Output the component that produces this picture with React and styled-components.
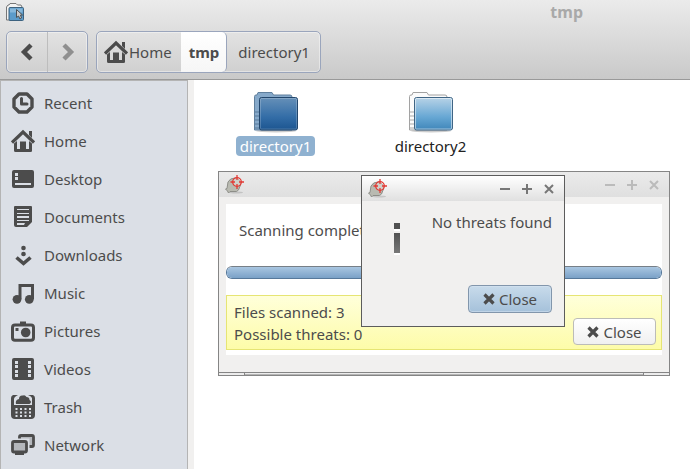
import React from "react";
import styled, { createGlobalStyle, css } from "styled-components";

const INK = "#4c4c4c";

const GlobalStyle = createGlobalStyle`
  * { box-sizing: border-box; }
  body {
    margin: 0;
    color: ${INK};
    background: #fff;
    font: 15px/22px "Noto Sans", "Open Sans", sans-serif;
  }
  button { font: inherit; color: inherit; margin: 0; }
  svg { display: block; flex: none; }
`;

const Page = styled.div`
  display: flex;
  flex-direction: column;
  min-height: 100vh;
`;

/* ---------- header ---------- */

const Header = styled.header`
  height: 80px;
  background: linear-gradient(#ebebeb, #c9c9c9);
  border-bottom: 1px solid #999;
`;

const TitleRow = styled.div`
  display: flex;
  align-items: center;
  justify-content: space-between;
  height: 24px;
  padding: 0 107px 0 6px;
`;

const Title = styled.h1`
  margin: 0;
  font-size: 16px;
  line-height: 22px;
  font-weight: 700;
  color: #a9a9a9;
`;

const Toolbar = styled.div`
  display: flex;
  gap: 8px;
  padding: 7px 6px 0;
`;

const Segments = styled.div`
  display: flex;
  height: 42px;
  border: 1px solid #9aa5bc;
  border-radius: 5px;
  background: linear-gradient(#e2e2e2, #d0d0d0);
  box-shadow: inset 0 0 0 1px #ffffff66;
`;

const NavButton = styled.button`
  display: grid;
  place-items: center;
  width: 40px;
  padding: 0;
  border: 0;
  background: none;
  color: ${(p) => (p.disabled ? "#8f8f8f" : INK)};
  & + & { border-left: 1px solid #bdbdbd; }
`;

const Crumb = styled.button`
  display: flex;
  align-items: center;
  gap: 1px;
  padding: 0 9px 0 7px;
  border: 0;
  background: none;
  ${(p) =>
    p.$current &&
    css`
      padding: 0 7px 0 8px;
      border-right: 1px solid #9aa5bc;
      border-radius: 0 5px 5px 0;
      background: linear-gradient(#fff, #f6f6f6);
      font-weight: 700;
    `}
  ${(p) => p.$last && css`padding: 0 10px 0 11px;`}
`;

/* ---------- body ---------- */

const Body = styled.div`
  display: flex;
  flex: 1;
`;

const Sidebar = styled.nav`
  flex: none;
  width: 188px;
  padding: 3px 0 4px 10px;
  background: #dbdfe6;
  border: solid #b4b4b4;
  border-width: 1px 1px 0 1px;
`;

const Place = styled.a`
  display: flex;
  align-items: center;
  gap: 9px;
  height: 38px;
  color: inherit;
  text-decoration: none;
`;

const Splitter = styled.div`
  flex: none;
  width: 6px;
  background: #f1f0ef;
`;

const Files = styled.main`
  position: relative;
  flex: 1;
  background: #fff;
`;

const FileGrid = styled.div`
  display: grid;
  grid-template-columns: repeat(auto-fill, 155px);
  padding: 11px 0 0 4px;
`;

const FileItem = styled.button`
  display: flex;
  flex-direction: column;
  align-items: center;
  gap: 3px;
  padding: 0;
  border: 0;
  background: none;
`;

const FileLabel = styled.span`
  padding: 0 4px;
  line-height: 20px;
  border-radius: 4px;
  color: ${(p) => (p.$selected ? "#fff" : "#222")};
  background: ${(p) => (p.$selected ? "#8fb1d0" : "none")};
`;

/* ---------- windows ---------- */

const Window = styled.section`
  position: absolute;
  display: flex;
  flex-direction: column;
  border: 1px solid ${(p) => (p.$active ? "#5c5c5c" : "#858585")};
  background: #f1f0ef;
`;

const ScanWindow = styled(Window)`
  top: 91px;
  left: 24px;
  width: 452px;
`;

const MessageWindow = styled(Window)`
  top: 95px;
  left: 167px;
  width: 204px;
`;

const WindowBar = styled.div`
  display: flex;
  align-items: center;
  justify-content: space-between;
  height: 25px;
  padding: 0 4px 0 6px;
  color: ${(p) => (p.$active ? "#777" : "#bbb")};
  background: ${(p) =>
    p.$active ? "linear-gradient(#fff, #e0e0e0)" : "linear-gradient(#ebebeb, #dfdfdf)"};
`;

const WindowControls = styled.div`
  display: flex;
`;

const WindowControl = styled.button`
  display: grid;
  place-items: center;
  width: 22px;
  height: 22px;
  padding: 0;
  border: 0;
  background: none;
`;

const ScanBody = styled.div`
  margin: 7px 7px 17px;
  padding-bottom: 5px;
  background: #fff;
`;

const Status = styled.p`
  margin: 0;
  padding: 15px 13px 25px;
`;

const Progress = styled.progress`
  display: block;
  width: 100%;
  height: 13px;
  appearance: none;
  border: 1px solid #56789a;
  border-top-color: #777f87;
  border-radius: 6px;
  overflow: hidden;
  &::-webkit-progress-bar { background: #e4e2e0; }
  &::-webkit-progress-value {
    background: linear-gradient(#a9c6e1, #7aa1c7);
  }
`;

const Summary = styled.div`
  display: flex;
  align-items: flex-end;
  justify-content: space-between;
  margin-top: 16px;
  padding: 5px 5px 4px 7px;
  border: 1px solid #e6e574;
  background: linear-gradient(#ffffda, #fdfca9);
`;

const Counts = styled.p`
  margin: 0;
`;

const GripBar = styled.div`
  height: 3px;
  padding: 0 25px;
  border-top: 1px solid #858585;
  background: #ececec;
`;

const Grip = styled.div`
  height: 2px;
  border: solid #858585;
  border-width: 0 1px;
  background: linear-gradient(#ececec 50%, #b5b5b5 50%);
`;

const PushButton = styled.button`
  display: flex;
  align-items: center;
  justify-content: center;
  gap: 4px;
  width: ${(p) => (p.$primary ? 84 : 83)}px;
  height: ${(p) => (p.$primary ? 28 : 27)}px;
  padding: 0;
  border: 1px solid ${(p) => (p.$primary ? "#8296ac" : "#bcbcb8")};
  border-radius: 4px;
  background: ${(p) =>
    p.$primary ? "linear-gradient(#c8dbeb, #a5c1da)" : "linear-gradient(#fff, #f0f0f0)"};
  box-shadow: ${(p) => (p.$primary ? "inset 0 0 0 1px #d7e5f188" : "none")};
`;

const MessageBody = styled.div`
  display: flex;
  justify-content: space-between;
  padding: 10px 12px 0 32px;
`;

const Message = styled.p`
  margin: 0;
`;

const MessageActions = styled.div`
  display: flex;
  justify-content: flex-end;
  padding: 30px 12px 13px;
`;

/* ---------- drawings ---------- */

const HomeShape = () => (
  <>
    <path d="M1 13.5 12 3l11 10.500" fill="none" stroke="currentColor" strokeWidth="3.2" />
    <path d="M18 2h3v7l-3-3z" />
    <path d="M3 14.500 6 12v8h3v-7.500h6V20h3v-8l3 2.500V22q0 1-1.500 1h-15Q3 23 3 21.500z" />
  </>
);

const shapes = {
  Recent: (
    <>
      <path d="M8 3h8l5 5v8l-5 5H8l-5-5V8z" fill="none" stroke="currentColor" strokeWidth="3.4" strokeLinejoin="round" />
      <path d="M10.500 7.500V13h5.500" fill="none" stroke="currentColor" strokeWidth="3" strokeLinecap="round" strokeLinejoin="round" />
    </>
  ),
  Home: <HomeShape />,
  Desktop: (
    <path fillRule="evenodd" d="M3 3h18q2 0 2 2v14q0 2-2 2H3q-2 0-2-2V5q0-2 2-2zM4 6v3h3V6zM4 10v3h3v-3zM4 16v2h16v-2z" />
  ),
  Documents: (
    <path fillRule="evenodd" d="M4 1h16q1 0 1 1v15l-5 5H5q-2 0-2-2V2q0-1 1-1zM6 4v1h12V4zM6 8v1h12V8zM6 11v2h12v-2zM6 15v1h12v-1zM6 18v2h7l1-2z" />
  ),
  Downloads: (
    <>
      <circle cx="12.500" cy="5" r="2.300" />
      <circle cx="12.500" cy="11" r="2.300" />
      <path d="m5.500 14.500 7 6 7-6" fill="none" stroke="currentColor" strokeWidth="3.6" />
    </>
  ),
  Music: (
    <>
      <path d="M7.500 3H23v15h-3V6h-9.500v12h-3z" />
      <circle cx="6" cy="18.300" r="4.400" />
      <circle cx="18.300" cy="18.300" r="4.400" />
    </>
  ),
  Pictures: (
    <>
      <rect x="1.500" y="6" width="21" height="15.300" rx="2.500" fill="none" stroke="currentColor" strokeWidth="3" />
      <path d="M9 2.500h6V6H9z" />
      <circle cx="14.700" cy="13.500" r="4.800" />
      <path d="M4.500 9h3v3h-3z" />
    </>
  ),
  Videos: (
    <path fillRule="evenodd" d="M3 1h18q2 0 2 2v18q0 2-2 2H3q-2 0-2-2V3q0-2 2-2zM4 4v3h3V4zM4 8v3h3V8zM4 13v3h3v-3zM4 17v3h3v-3zM17 4v3h3V4zM17 8v3h3V8zM17 13v3h3v-3zM17 17v3h3v-3z" />
  ),
  Trash: (
    <>
      <path d="M4 0H2Q0 1 0 3v17q0 4 4 4h16q4 0 4-4V3q0-2-2-3h-5q3 1 4 3v7H3V4q0-2 4-4z" />
      <path d="M5 9q-1-4 3-5 0-4 4-3.500 2-1 3.500 1.500 3 0 3 3 3 2 0 4z" />
      <path d="M4.500 14h16M4.500 17.500h16M4.500 21h16" stroke="#dbdfe6" strokeWidth="1.800" strokeDasharray="2 2.500" />
    </>
  ),
  Network: (
    <>
      <rect x="8.500" y="2.500" width="14" height="11" rx="1.500" fill="#b4b7bc" stroke="currentColor" strokeWidth="2.800" />
      <path d="M0 5.500h18.500V18H17v4.500H0z" fill="#dbdfe6" />
      <rect x="1.500" y="8.500" width="14" height="10.500" rx="1.500" fill="#b4b7bc" stroke="currentColor" strokeWidth="2.800" />
      <path d="M4 20h9v2H4z" />
    </>
  ),
};

const PlaceIcon = ({ name }) => (
  <svg width="24" height="24" viewBox="0 0 24 24" fill="currentColor" aria-hidden="true">
    {shapes[name]}
  </svg>
);

const AppIcon = () => (
  <svg width="18" height="18" viewBox="0 0 18 18" aria-hidden="true">
    <path d="M.5 17V4L2 2h1l1-1.500h6L11.500 2H15l1 2v13z" fill="#f2f2f2" stroke="#777" />
    <rect x="3" y="4.500" width="14.500" height="13" rx="1" fill="#5b9bca" stroke="#3d627f" />
    <path d="M4 5.500h12.500v4H4z" fill="#86b7db" />
    <path d="M10.500 6.500v8l2-1.500 1.500 3 1.500-1-1-3h2z" fill="#c9c9c9" stroke="#4a5054" />
  </svg>
);

const Chevron = ({ right }) => (
  <svg width="14" height="20" viewBox="0 0 14 20" aria-hidden="true">
    <path d={right ? "m3 3 7 7-7 7" : "m11 3-7 7 7 7"} fill="none" stroke="currentColor" strokeWidth="4.400" />
  </svg>
);

const Folder = ({ selected }) => {
  const id = selected ? "folder-dark" : "folder-light";
  return (
    <svg width="46" height="42" viewBox="0 0 46 42" aria-hidden="true">
      <defs>
        <linearGradient id={id} x2="0" y2="1">
          <stop offset="0" stopColor={selected ? "#6690b8" : "#b8d3e7"} />
          <stop offset=".6" stopColor={selected ? "#336da7" : "#67a7d4"} />
          <stop offset="1" stopColor={selected ? "#1c5590" : "#3f86b9"} />
        </linearGradient>
      </defs>
      <ellipse cx="23" cy="40" rx="20" ry="1.500" fill="#0003" />
      <path
        d="M1.500 39V5.500Q1.500 4 3 4h1l1-2.500h14L20.500 4H37q2 0 2 2v33z"
        fill={selected ? "#86a9ca" : "#fbfbfb"}
        stroke={selected ? "#5f7f9d" : "#a2a2a2"}
      />
      <path d="M2 21h4M2 25h4M2 29h4M2 33h4M2 37h4" stroke={selected ? "#6f91b1" : "#d2d2d2"} strokeWidth="2" />
      <rect x="6.500" y="6.500" width="38" height="32.500" rx="2" fill={`url(#${id})`} stroke={selected ? "#22466c" : "#3f6585"} />
      <rect x="7.500" y="7.500" width="36" height="30.500" rx="1" fill="none" stroke="#fff" strokeOpacity={selected ? 0.2 : 0.5} />
    </svg>
  );
};

const ScannerIcon = () => (
  <svg width="20" height="20" viewBox="0 0 20 20" aria-hidden="true">
    <ellipse cx="11" cy="17.500" rx="7" ry="1" fill="#0002" />
    <path d="M2.500 16 .5 14l1.500-.500L3 7q2-4 7-4 6 1 5.500 7l-2 5-2 1.500H5L3.500 18z" fill="#b9bab1" stroke="#8d8e88" />
    <circle cx="12" cy="7" r="4.300" fill="#fff5" stroke="#e23a34" strokeWidth="1.300" />
    <path d="M12 0v5M12 9v5M5.500 7H10M14 7h5" stroke="#e23a34" strokeWidth="1.300" />
  </svg>
);

const controlPaths = {
  Minimize: "M2 7h10",
  Maximize: "M2 7h10M7 2v10",
  Close: "m3 3 8 8M11 3l-8 8",
};

const CloseCross = () => (
  <svg width="12" height="12" viewBox="0 0 12 12" aria-hidden="true">
    <path d="m1.500 1.500 9 9M10.500 1.500l-9 9" stroke="currentColor" strokeWidth="3.200" />
  </svg>
);

const InfoIcon = () => (
  <svg width="7" height="44" viewBox="0 0 7 44" aria-hidden="true">
    <defs>
      <linearGradient id="info" x2="0" y2="1">
        <stop offset="0" stopColor="#525252" />
        <stop offset="1" stopColor="#787878" />
      </linearGradient>
    </defs>
    <path d="M0 18h6v2H0zM0 42h6v2H0z" fill="#fff" />
    <path d="M0 12h6v6H0z" fill="#505050" />
    <path d="M0 22h6v20H0z" fill="url(#info)" />
  </svg>
);

const TitleBar = ({ active }) => (
  <WindowBar $active={active}>
    <ScannerIcon />
    <WindowControls>
      {Object.entries(controlPaths).map(([name, d]) => (
        <WindowControl key={name} type="button" aria-label={name}>
          <svg width="14" height="14" viewBox="0 0 14 14" aria-hidden="true">
            <path d={d} stroke="currentColor" strokeWidth="2" />
          </svg>
        </WindowControl>
      ))}
    </WindowControls>
  </WindowBar>
);

export default function App() {
  return (
    <Page>
      <GlobalStyle />
      <Header>
        <TitleRow>
          <AppIcon />
          <Title>tmp</Title>
        </TitleRow>
        <Toolbar>
          <Segments>
            <NavButton type="button" aria-label="Back"><Chevron /></NavButton>
            <NavButton type="button" aria-label="Forward" disabled><Chevron right /></NavButton>
          </Segments>
          <Segments>
            <Crumb type="button"><PlaceIcon name="Home" />Home</Crumb>
            <Crumb type="button" $current>tmp</Crumb>
            <Crumb type="button" $last>directory1</Crumb>
          </Segments>
        </Toolbar>
      </Header>
      <Body>
        <Sidebar aria-label="Places">
          {Object.keys(shapes).map((name) => (
            <Place key={name} href={`#${name.toLowerCase()}`}>
              <PlaceIcon name={name} />
              {name}
            </Place>
          ))}
        </Sidebar>
        <Splitter />
        <Files>
          <FileGrid>
            <FileItem type="button">
              <Folder selected />
              <FileLabel $selected>directory1</FileLabel>
            </FileItem>
            <FileItem type="button">
              <Folder />
              <FileLabel>directory2</FileLabel>
            </FileItem>
          </FileGrid>
          <ScanWindow aria-label="Scan">
            <TitleBar />
            <ScanBody>
              <Status>Scanning complete</Status>
              <Progress value="100" max="100" aria-label="Scan progress" />
              <Summary>
                <Counts>
                  Files scanned: 3<br />
                  Possible threats: 0
                </Counts>
                <PushButton type="button"><CloseCross />Close</PushButton>
              </Summary>
            </ScanBody>
            <GripBar><Grip /></GripBar>
          </ScanWindow>
          <MessageWindow $active role="dialog" aria-label="Scan result">
            <TitleBar active />
            <MessageBody>
              <InfoIcon />
              <Message>No threats found</Message>
            </MessageBody>
            <MessageActions>
              <PushButton type="button" $primary><CloseCross />Close</PushButton>
            </MessageActions>
          </MessageWindow>
        </Files>
      </Body>
    </Page>
  );
}
